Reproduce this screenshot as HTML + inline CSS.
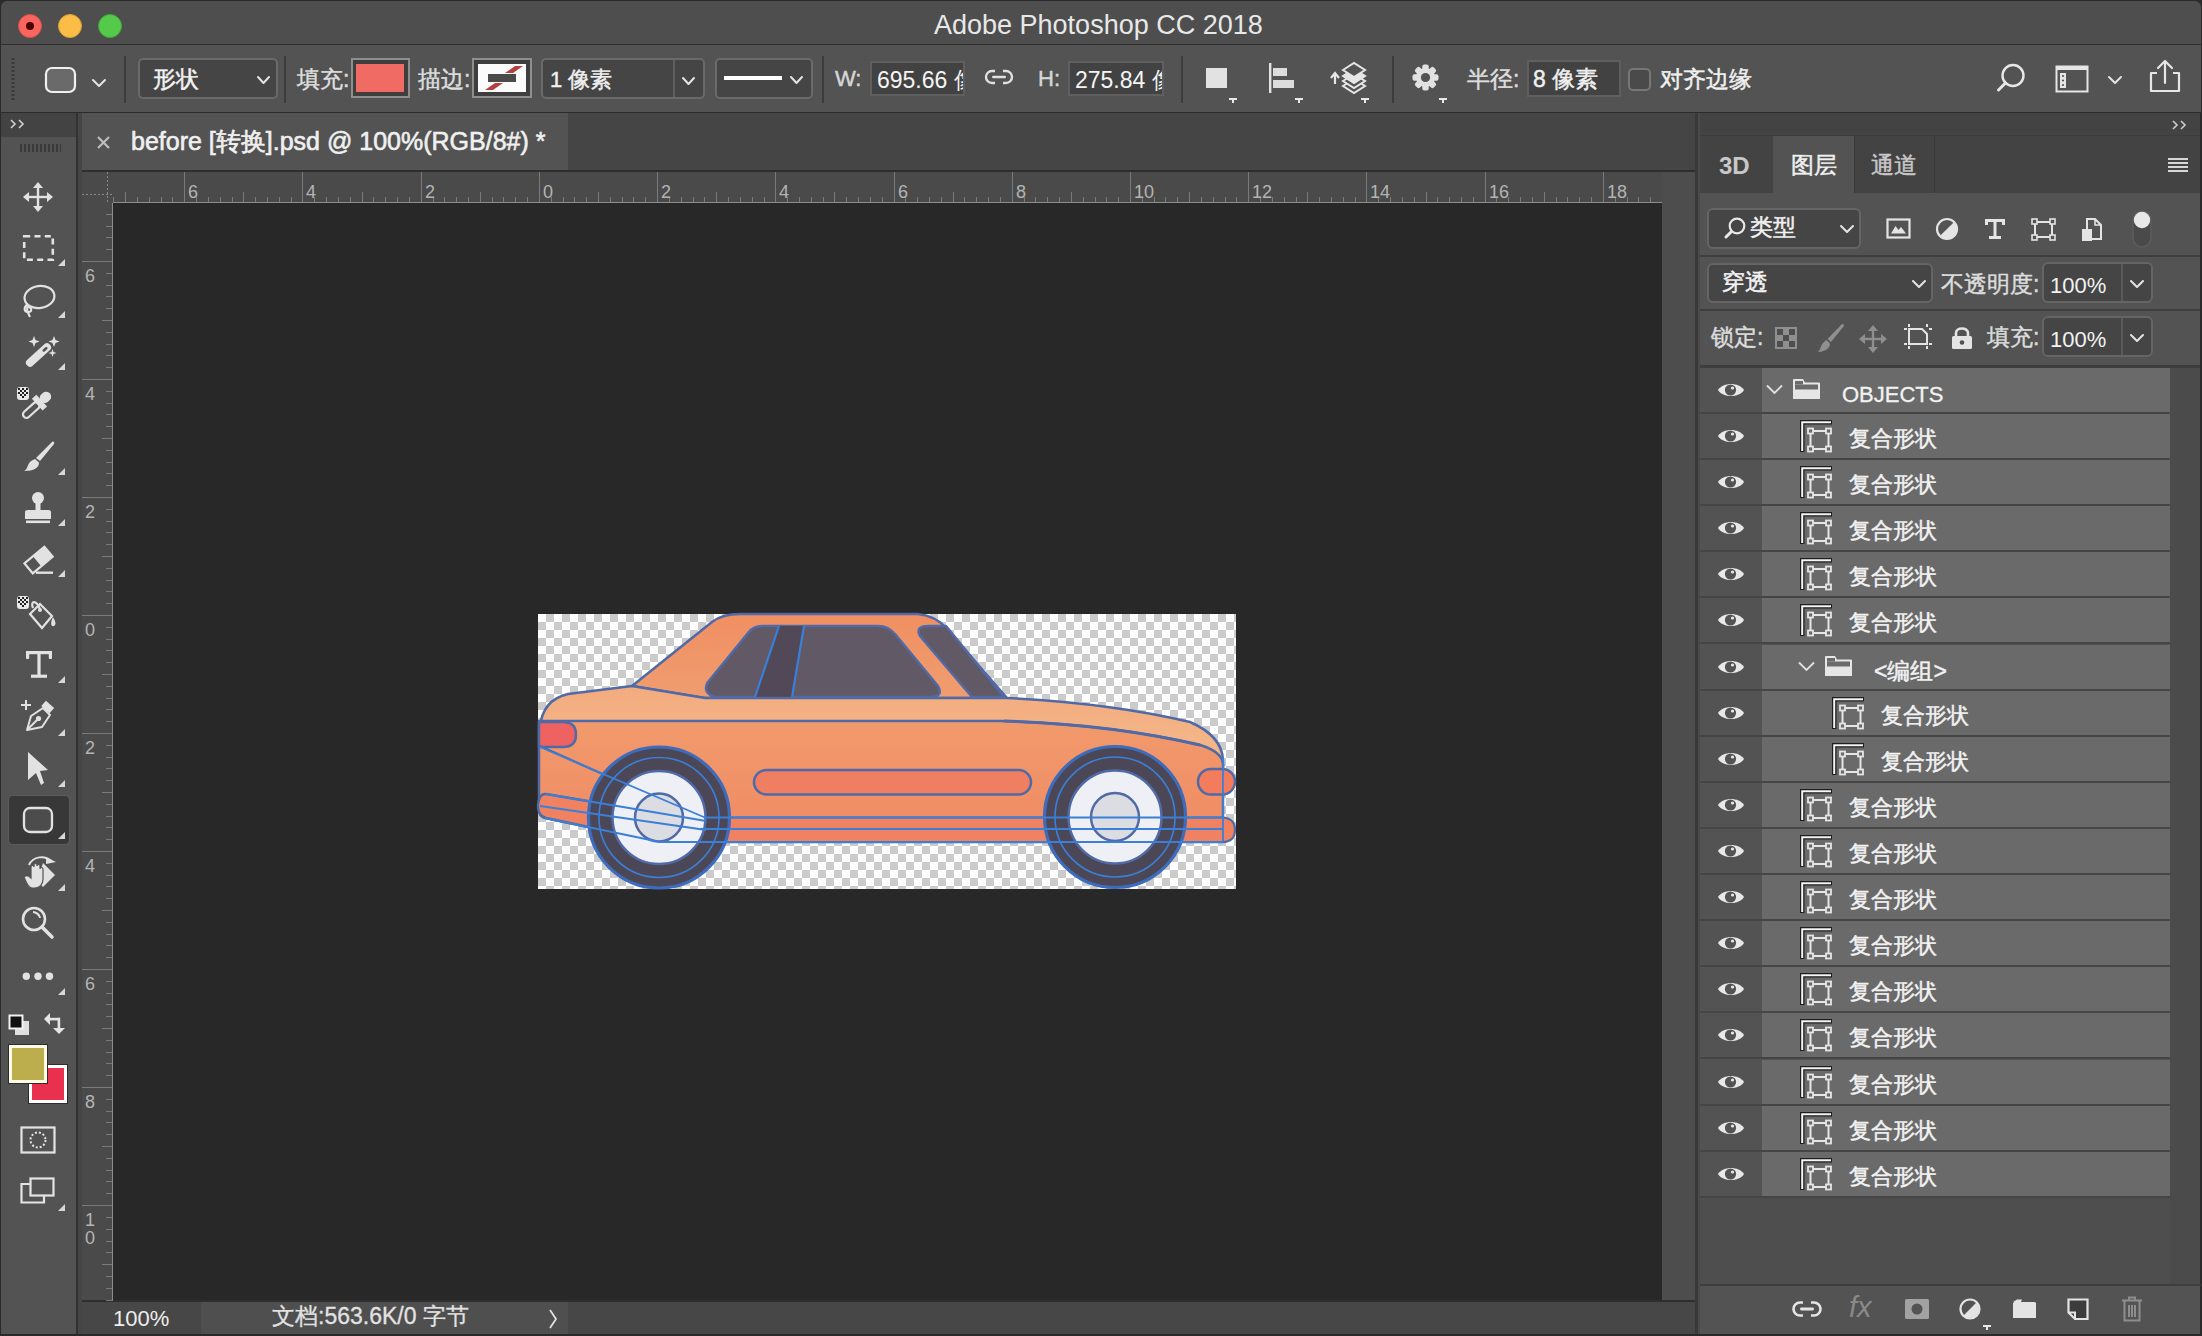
<!DOCTYPE html><html><head><meta charset='utf-8'><style>
*{margin:0;padding:0;box-sizing:border-box}
html,body{width:2202px;height:1336px;overflow:hidden;background:#282828}
body{font-family:"Liberation Sans",sans-serif;color:#e6e6e6;position:relative}
.a{position:absolute}
.t{position:absolute;white-space:nowrap;line-height:1}
svg{position:absolute;overflow:visible}
</style></head><body>
<div class='a' style='left:0px;top:0px;width:2202px;height:1336px;background:#2a2a2a;'></div>
<div class='a' style='left:1px;top:1px;width:2200px;height:43px;background:#4e4e4e;border-radius:6px 6px 0 0'></div>
<div class='a' style='left:0px;top:44px;width:2202px;height:1px;background:#2c2c2c;'></div>
<svg style='left:17px;top:13px;' width='26' height='26' viewBox='0 0 26 26'><circle cx='13' cy='13' r='11.5' fill='#f8665f' stroke='#d9504a' stroke-width='1'/></svg>
<svg style='left:57px;top:13px;' width='26' height='26' viewBox='0 0 26 26'><circle cx='13' cy='13' r='11.5' fill='#fbbd45' stroke='#d9a03a' stroke-width='1'/></svg>
<svg style='left:97px;top:13px;' width='26' height='26' viewBox='0 0 26 26'><circle cx='13' cy='13' r='11.5' fill='#55c94a' stroke='#3ea93a' stroke-width='1'/></svg>
<svg style='left:25px;top:21px;' width='10' height='10' viewBox='0 0 10 10'><circle cx='5' cy='5' r='4' fill='#4d0000'/></svg>
<div class='t' style='left:934px;top:12px;font-size:27px;color:#e8e8e8;'>Adobe Photoshop CC 2018</div>
<div class='a' style='left:1px;top:45px;width:2200px;height:67px;background:#535353;'></div>
<div class='a' style='left:0px;top:112px;width:2202px;height:1px;background:#2c2c2c;'></div>
<div class='a' style='left:1px;top:113px;width:75px;height:1221px;background:#535353;'></div>
<div class='a' style='left:1px;top:113px;width:75px;height:24px;background:#434343;'></div>
<div class='a' style='left:76px;top:113px;width:6px;height:1221px;background:#454545;'></div>
<div class='a' style='left:76px;top:113px;width:2px;height:1221px;background:#323232;'></div>
<div class='a' style='left:82px;top:113px;width:1613px;height:57px;background:#454545;'></div>
<div class='a' style='left:82px;top:113px;width:486px;height:57px;background:#535353;'></div>
<div class='a' style='left:82px;top:170px;width:1613px;height:2px;background:#2e2e2e;'></div>
<div class='a' style='left:82px;top:172px;width:1580px;height:31px;background:#4a4a4a;'></div>
<div class='a' style='left:82px;top:203px;width:31px;height:1099px;background:#4a4a4a;'></div>
<div class='a' style='left:113px;top:203px;width:1549px;height:1097px;background:#282828;'></div>
<div class='a' style='left:1662px;top:172px;width:33px;height:1130px;background:#4d4d4d;'></div>
<div class='a' style='left:82px;top:1300px;width:1613px;height:2px;background:#2e2e2e;'></div>
<div class='a' style='left:82px;top:1302px;width:1613px;height:32px;background:#474747;'></div>
<div class='a' style='left:201px;top:1302px;width:367px;height:32px;background:#4f4f4f;'></div>
<div class='a' style='left:1695px;top:113px;width:3px;height:1221px;background:#393939;'></div>
<div class='a' style='left:1698px;top:113px;width:2px;height:1221px;background:#4a4a4a;'></div>
<div class='a' style='left:1700px;top:113px;width:501px;height:1221px;background:#535353;'></div>
<div class='a' style='left:1700px;top:113px;width:501px;height:23px;background:#434343;'></div>
<div class='a' style='left:1700px;top:136px;width:501px;height:57px;background:#434343;'></div>
<div class='a' style='left:1773px;top:136px;width:82px;height:57px;background:#535353;'></div>
<div class='a' style='left:0px;top:1334px;width:2202px;height:2px;background:#2a2a2a;'></div>
<svg style='left:113px;top:172px;' width='1549' height='31' viewBox='0 0 1549 31'><g stroke='#7a7a7a' stroke-width='1'><line x1='0.5' y1='25' x2='0.5' y2='31' /><line x1='12.5' y1='20' x2='12.5' y2='31' /><line x1='24.5' y1='25' x2='24.5' y2='31' /><line x1='36.5' y1='25' x2='36.5' y2='31' /><line x1='48.5' y1='25' x2='48.5' y2='31' /><line x1='59.5' y1='25' x2='59.5' y2='31' /><line x1='71.5' y1='0' x2='71.5' y2='31' /><line x1='83.5' y1='25' x2='83.5' y2='31' /><line x1='95.5' y1='25' x2='95.5' y2='31' /><line x1='107.5' y1='25' x2='107.5' y2='31' /><line x1='119.5' y1='25' x2='119.5' y2='31' /><line x1='130.5' y1='20' x2='130.5' y2='31' /><line x1='142.5' y1='25' x2='142.5' y2='31' /><line x1='154.5' y1='25' x2='154.5' y2='31' /><line x1='166.5' y1='25' x2='166.5' y2='31' /><line x1='178.5' y1='25' x2='178.5' y2='31' /><line x1='189.5' y1='0' x2='189.5' y2='31' /><line x1='201.5' y1='25' x2='201.5' y2='31' /><line x1='213.5' y1='25' x2='213.5' y2='31' /><line x1='225.5' y1='25' x2='225.5' y2='31' /><line x1='237.5' y1='25' x2='237.5' y2='31' /><line x1='249.5' y1='20' x2='249.5' y2='31' /><line x1='260.5' y1='25' x2='260.5' y2='31' /><line x1='272.5' y1='25' x2='272.5' y2='31' /><line x1='284.5' y1='25' x2='284.5' y2='31' /><line x1='296.5' y1='25' x2='296.5' y2='31' /><line x1='308.5' y1='0' x2='308.5' y2='31' /><line x1='320.5' y1='25' x2='320.5' y2='31' /><line x1='331.5' y1='25' x2='331.5' y2='31' /><line x1='343.5' y1='25' x2='343.5' y2='31' /><line x1='355.5' y1='25' x2='355.5' y2='31' /><line x1='367.5' y1='20' x2='367.5' y2='31' /><line x1='379.5' y1='25' x2='379.5' y2='31' /><line x1='390.5' y1='25' x2='390.5' y2='31' /><line x1='402.5' y1='25' x2='402.5' y2='31' /><line x1='414.5' y1='25' x2='414.5' y2='31' /><line x1='426.5' y1='0' x2='426.5' y2='31' /><line x1='438.5' y1='25' x2='438.5' y2='31' /><line x1='450.5' y1='25' x2='450.5' y2='31' /><line x1='461.5' y1='25' x2='461.5' y2='31' /><line x1='473.5' y1='25' x2='473.5' y2='31' /><line x1='485.5' y1='20' x2='485.5' y2='31' /><line x1='497.5' y1='25' x2='497.5' y2='31' /><line x1='509.5' y1='25' x2='509.5' y2='31' /><line x1='520.5' y1='25' x2='520.5' y2='31' /><line x1='532.5' y1='25' x2='532.5' y2='31' /><line x1='544.5' y1='0' x2='544.5' y2='31' /><line x1='556.5' y1='25' x2='556.5' y2='31' /><line x1='568.5' y1='25' x2='568.5' y2='31' /><line x1='580.5' y1='25' x2='580.5' y2='31' /><line x1='591.5' y1='25' x2='591.5' y2='31' /><line x1='603.5' y1='20' x2='603.5' y2='31' /><line x1='615.5' y1='25' x2='615.5' y2='31' /><line x1='627.5' y1='25' x2='627.5' y2='31' /><line x1='639.5' y1='25' x2='639.5' y2='31' /><line x1='651.5' y1='25' x2='651.5' y2='31' /><line x1='662.5' y1='0' x2='662.5' y2='31' /><line x1='674.5' y1='25' x2='674.5' y2='31' /><line x1='686.5' y1='25' x2='686.5' y2='31' /><line x1='698.5' y1='25' x2='698.5' y2='31' /><line x1='710.5' y1='25' x2='710.5' y2='31' /><line x1='721.5' y1='20' x2='721.5' y2='31' /><line x1='733.5' y1='25' x2='733.5' y2='31' /><line x1='745.5' y1='25' x2='745.5' y2='31' /><line x1='757.5' y1='25' x2='757.5' y2='31' /><line x1='769.5' y1='25' x2='769.5' y2='31' /><line x1='781.5' y1='0' x2='781.5' y2='31' /><line x1='792.5' y1='25' x2='792.5' y2='31' /><line x1='804.5' y1='25' x2='804.5' y2='31' /><line x1='816.5' y1='25' x2='816.5' y2='31' /><line x1='828.5' y1='25' x2='828.5' y2='31' /><line x1='840.5' y1='20' x2='840.5' y2='31' /><line x1='851.5' y1='25' x2='851.5' y2='31' /><line x1='863.5' y1='25' x2='863.5' y2='31' /><line x1='875.5' y1='25' x2='875.5' y2='31' /><line x1='887.5' y1='25' x2='887.5' y2='31' /><line x1='899.5' y1='0' x2='899.5' y2='31' /><line x1='911.5' y1='25' x2='911.5' y2='31' /><line x1='922.5' y1='25' x2='922.5' y2='31' /><line x1='934.5' y1='25' x2='934.5' y2='31' /><line x1='946.5' y1='25' x2='946.5' y2='31' /><line x1='958.5' y1='20' x2='958.5' y2='31' /><line x1='970.5' y1='25' x2='970.5' y2='31' /><line x1='982.5' y1='25' x2='982.5' y2='31' /><line x1='993.5' y1='25' x2='993.5' y2='31' /><line x1='1005.5' y1='25' x2='1005.5' y2='31' /><line x1='1017.5' y1='0' x2='1017.5' y2='31' /><line x1='1029.5' y1='25' x2='1029.5' y2='31' /><line x1='1041.5' y1='25' x2='1041.5' y2='31' /><line x1='1052.5' y1='25' x2='1052.5' y2='31' /><line x1='1064.5' y1='25' x2='1064.5' y2='31' /><line x1='1076.5' y1='20' x2='1076.5' y2='31' /><line x1='1088.5' y1='25' x2='1088.5' y2='31' /><line x1='1100.5' y1='25' x2='1100.5' y2='31' /><line x1='1112.5' y1='25' x2='1112.5' y2='31' /><line x1='1123.5' y1='25' x2='1123.5' y2='31' /><line x1='1135.5' y1='0' x2='1135.5' y2='31' /><line x1='1147.5' y1='25' x2='1147.5' y2='31' /><line x1='1159.5' y1='25' x2='1159.5' y2='31' /><line x1='1171.5' y1='25' x2='1171.5' y2='31' /><line x1='1183.5' y1='25' x2='1183.5' y2='31' /><line x1='1194.5' y1='20' x2='1194.5' y2='31' /><line x1='1206.5' y1='25' x2='1206.5' y2='31' /><line x1='1218.5' y1='25' x2='1218.5' y2='31' /><line x1='1230.5' y1='25' x2='1230.5' y2='31' /><line x1='1242.5' y1='25' x2='1242.5' y2='31' /><line x1='1253.5' y1='0' x2='1253.5' y2='31' /><line x1='1265.5' y1='25' x2='1265.5' y2='31' /><line x1='1277.5' y1='25' x2='1277.5' y2='31' /><line x1='1289.5' y1='25' x2='1289.5' y2='31' /><line x1='1301.5' y1='25' x2='1301.5' y2='31' /><line x1='1313.5' y1='20' x2='1313.5' y2='31' /><line x1='1324.5' y1='25' x2='1324.5' y2='31' /><line x1='1336.5' y1='25' x2='1336.5' y2='31' /><line x1='1348.5' y1='25' x2='1348.5' y2='31' /><line x1='1360.5' y1='25' x2='1360.5' y2='31' /><line x1='1372.5' y1='0' x2='1372.5' y2='31' /><line x1='1383.5' y1='25' x2='1383.5' y2='31' /><line x1='1395.5' y1='25' x2='1395.5' y2='31' /><line x1='1407.5' y1='25' x2='1407.5' y2='31' /><line x1='1419.5' y1='25' x2='1419.5' y2='31' /><line x1='1431.5' y1='20' x2='1431.5' y2='31' /><line x1='1443.5' y1='25' x2='1443.5' y2='31' /><line x1='1454.5' y1='25' x2='1454.5' y2='31' /><line x1='1466.5' y1='25' x2='1466.5' y2='31' /><line x1='1478.5' y1='25' x2='1478.5' y2='31' /><line x1='1490.5' y1='0' x2='1490.5' y2='31' /><line x1='1502.5' y1='25' x2='1502.5' y2='31' /><line x1='1514.5' y1='25' x2='1514.5' y2='31' /><line x1='1525.5' y1='25' x2='1525.5' y2='31' /><line x1='1537.5' y1='25' x2='1537.5' y2='31' /></g><line x1='0' y1='30.5' x2='1549' y2='30.5' stroke='#8c8c8c' stroke-width='1'/></svg>
<div class='t' style='left:188px;top:183px;font-size:18px;color:#b4b4b4;'>6</div>
<div class='t' style='left:306px;top:183px;font-size:18px;color:#b4b4b4;'>4</div>
<div class='t' style='left:425px;top:183px;font-size:18px;color:#b4b4b4;'>2</div>
<div class='t' style='left:543px;top:183px;font-size:18px;color:#b4b4b4;'>0</div>
<div class='t' style='left:661px;top:183px;font-size:18px;color:#b4b4b4;'>2</div>
<div class='t' style='left:779px;top:183px;font-size:18px;color:#b4b4b4;'>4</div>
<div class='t' style='left:898px;top:183px;font-size:18px;color:#b4b4b4;'>6</div>
<div class='t' style='left:1016px;top:183px;font-size:18px;color:#b4b4b4;'>8</div>
<div class='t' style='left:1134px;top:183px;font-size:18px;color:#b4b4b4;'>10</div>
<div class='t' style='left:1252px;top:183px;font-size:18px;color:#b4b4b4;'>12</div>
<div class='t' style='left:1370px;top:183px;font-size:18px;color:#b4b4b4;'>14</div>
<div class='t' style='left:1489px;top:183px;font-size:18px;color:#b4b4b4;'>16</div>
<div class='t' style='left:1607px;top:183px;font-size:18px;color:#b4b4b4;'>18</div>
<svg style='left:82px;top:203px;' width='31' height='1097' viewBox='0 0 31 1097'><g stroke='#7a7a7a' stroke-width='1'><line x1='24' y1='11.5' x2='31' y2='11.5' /><line x1='24' y1='23.5' x2='31' y2='23.5' /><line x1='24' y1='34.5' x2='31' y2='34.5' /><line x1='24' y1='46.5' x2='31' y2='46.5' /><line x1='0' y1='58.5' x2='31' y2='58.5' /><line x1='24' y1='70.5' x2='31' y2='70.5' /><line x1='24' y1='82.5' x2='31' y2='82.5' /><line x1='24' y1='93.5' x2='31' y2='93.5' /><line x1='24' y1='105.5' x2='31' y2='105.5' /><line x1='20' y1='117.5' x2='31' y2='117.5' /><line x1='24' y1='129.5' x2='31' y2='129.5' /><line x1='24' y1='141.5' x2='31' y2='141.5' /><line x1='24' y1='152.5' x2='31' y2='152.5' /><line x1='24' y1='164.5' x2='31' y2='164.5' /><line x1='0' y1='176.5' x2='31' y2='176.5' /><line x1='24' y1='188.5' x2='31' y2='188.5' /><line x1='24' y1='200.5' x2='31' y2='200.5' /><line x1='24' y1='211.5' x2='31' y2='211.5' /><line x1='24' y1='223.5' x2='31' y2='223.5' /><line x1='20' y1='235.5' x2='31' y2='235.5' /><line x1='24' y1='247.5' x2='31' y2='247.5' /><line x1='24' y1='259.5' x2='31' y2='259.5' /><line x1='24' y1='270.5' x2='31' y2='270.5' /><line x1='24' y1='282.5' x2='31' y2='282.5' /><line x1='0' y1='294.5' x2='31' y2='294.5' /><line x1='24' y1='306.5' x2='31' y2='306.5' /><line x1='24' y1='318.5' x2='31' y2='318.5' /><line x1='24' y1='329.5' x2='31' y2='329.5' /><line x1='24' y1='341.5' x2='31' y2='341.5' /><line x1='20' y1='353.5' x2='31' y2='353.5' /><line x1='24' y1='365.5' x2='31' y2='365.5' /><line x1='24' y1='377.5' x2='31' y2='377.5' /><line x1='24' y1='388.5' x2='31' y2='388.5' /><line x1='24' y1='400.5' x2='31' y2='400.5' /><line x1='0' y1='412.5' x2='31' y2='412.5' /><line x1='24' y1='424.5' x2='31' y2='424.5' /><line x1='24' y1='436.5' x2='31' y2='436.5' /><line x1='24' y1='447.5' x2='31' y2='447.5' /><line x1='24' y1='459.5' x2='31' y2='459.5' /><line x1='20' y1='471.5' x2='31' y2='471.5' /><line x1='24' y1='483.5' x2='31' y2='483.5' /><line x1='24' y1='495.5' x2='31' y2='495.5' /><line x1='24' y1='506.5' x2='31' y2='506.5' /><line x1='24' y1='518.5' x2='31' y2='518.5' /><line x1='0' y1='530.5' x2='31' y2='530.5' /><line x1='24' y1='542.5' x2='31' y2='542.5' /><line x1='24' y1='554.5' x2='31' y2='554.5' /><line x1='24' y1='565.5' x2='31' y2='565.5' /><line x1='24' y1='577.5' x2='31' y2='577.5' /><line x1='20' y1='589.5' x2='31' y2='589.5' /><line x1='24' y1='601.5' x2='31' y2='601.5' /><line x1='24' y1='613.5' x2='31' y2='613.5' /><line x1='24' y1='624.5' x2='31' y2='624.5' /><line x1='24' y1='636.5' x2='31' y2='636.5' /><line x1='0' y1='648.5' x2='31' y2='648.5' /><line x1='24' y1='660.5' x2='31' y2='660.5' /><line x1='24' y1='672.5' x2='31' y2='672.5' /><line x1='24' y1='683.5' x2='31' y2='683.5' /><line x1='24' y1='695.5' x2='31' y2='695.5' /><line x1='20' y1='707.5' x2='31' y2='707.5' /><line x1='24' y1='719.5' x2='31' y2='719.5' /><line x1='24' y1='731.5' x2='31' y2='731.5' /><line x1='24' y1='742.5' x2='31' y2='742.5' /><line x1='24' y1='754.5' x2='31' y2='754.5' /><line x1='0' y1='766.5' x2='31' y2='766.5' /><line x1='24' y1='778.5' x2='31' y2='778.5' /><line x1='24' y1='790.5' x2='31' y2='790.5' /><line x1='24' y1='801.5' x2='31' y2='801.5' /><line x1='24' y1='813.5' x2='31' y2='813.5' /><line x1='20' y1='825.5' x2='31' y2='825.5' /><line x1='24' y1='837.5' x2='31' y2='837.5' /><line x1='24' y1='849.5' x2='31' y2='849.5' /><line x1='24' y1='860.5' x2='31' y2='860.5' /><line x1='24' y1='872.5' x2='31' y2='872.5' /><line x1='0' y1='884.5' x2='31' y2='884.5' /><line x1='24' y1='896.5' x2='31' y2='896.5' /><line x1='24' y1='908.5' x2='31' y2='908.5' /><line x1='24' y1='919.5' x2='31' y2='919.5' /><line x1='24' y1='931.5' x2='31' y2='931.5' /><line x1='20' y1='943.5' x2='31' y2='943.5' /><line x1='24' y1='955.5' x2='31' y2='955.5' /><line x1='24' y1='967.5' x2='31' y2='967.5' /><line x1='24' y1='978.5' x2='31' y2='978.5' /><line x1='24' y1='990.5' x2='31' y2='990.5' /><line x1='0' y1='1002.5' x2='31' y2='1002.5' /><line x1='24' y1='1014.5' x2='31' y2='1014.5' /><line x1='24' y1='1026.5' x2='31' y2='1026.5' /><line x1='24' y1='1038.5' x2='31' y2='1038.5' /><line x1='24' y1='1049.5' x2='31' y2='1049.5' /><line x1='20' y1='1061.5' x2='31' y2='1061.5' /><line x1='24' y1='1073.5' x2='31' y2='1073.5' /><line x1='24' y1='1085.5' x2='31' y2='1085.5' /><line x1='24' y1='1097.5' x2='31' y2='1097.5' /></g><line x1='30.5' y1='0' x2='30.5' y2='1097' stroke='#8c8c8c' stroke-width='1'/></svg>
<div class='t' style='left:85px;top:267px;font-size:18px;color:#b4b4b4;'>6</div>
<div class='t' style='left:85px;top:385px;font-size:18px;color:#b4b4b4;'>4</div>
<div class='t' style='left:85px;top:503px;font-size:18px;color:#b4b4b4;'>2</div>
<div class='t' style='left:85px;top:621px;font-size:18px;color:#b4b4b4;'>0</div>
<div class='t' style='left:85px;top:739px;font-size:18px;color:#b4b4b4;'>2</div>
<div class='t' style='left:85px;top:857px;font-size:18px;color:#b4b4b4;'>4</div>
<div class='t' style='left:85px;top:975px;font-size:18px;color:#b4b4b4;'>6</div>
<div class='t' style='left:85px;top:1093px;font-size:18px;color:#b4b4b4;'>8</div>
<div class='t' style='left:85px;top:1211px;font-size:18px;color:#b4b4b4;'>1</div>
<div class='t' style='left:85px;top:1229px;font-size:18px;color:#b4b4b4;'>0</div>
<svg style='left:82px;top:172px;' width='31' height='31' viewBox='0 0 31 31'><g stroke='#8a8a8a' stroke-width='1' stroke-dasharray='2,2'><line x1='0' y1='22.5' x2='31' y2='22.5'/><line x1='25.5' y1='0' x2='25.5' y2='31'/></g></svg>
<svg style='left:96px;top:135px;' width='15' height='15' viewBox='0 0 15 15'><g stroke='#bdbdbd' stroke-width='2.2'><line x1='2' y1='2' x2='13' y2='13'/><line x1='13' y1='2' x2='2' y2='13'/></g></svg>
<div class='t' style='left:131px;top:129px;font-size:25px;color:#f0f0f0;-webkit-text-stroke:0.6px #f0f0f0'>before [转换].psd @ 100%(RGB/8#) *</div>
<div class='t' style='left:113px;top:1308px;font-size:22px;color:#eeeeee;'>100%</div>
<div class='t' style='left:272px;top:1305px;font-size:23px;color:#e2e2e2;-webkit-text-stroke:0.3px #e2e2e2'>文档:563.6K/0 字节</div>
<svg style='left:548px;top:1309px;' width='10' height='20' viewBox='0 0 10 20'><polyline points='2,1 8,10 2,19' fill='none' stroke='#e0e0e0' stroke-width='1.8'/></svg>
<svg style='left:11px;top:58px;' width='4' height='44' viewBox='0 0 4 44'><line x1='2' y1='0' x2='2' y2='44' stroke='#3a3a3a' stroke-width='3' stroke-dasharray='2,2'/></svg>
<svg style='left:44px;top:66px;' width='33' height='28' viewBox='0 0 33 28'><rect x='2' y='2' width='29' height='24' rx='6' fill='#6a6a6a' stroke='#f0f0f0' stroke-width='2.2'/></svg>
<svg style='left:92px;top:79px;' width='14' height='8' viewBox='0 0 14 8'><polyline points='1,1 7.0,7 13,1' fill='none' stroke='#e4e4e4' stroke-width='2' stroke-linecap='round' stroke-linejoin='round'/></svg>
<div class='a' style='left:124px;top:56px;width:2px;height:47px;background:#3c3c3c;'></div>
<div class='a' style='left:138px;top:58px;width:140px;height:41px;background:#454545;border:2px solid #6a6a6a;border-radius:5px'></div>
<div class='t' style='left:153px;top:68px;font-size:23px;color:#f2f2f2;-webkit-text-stroke:0.45px #f2f2f2'>形状</div>
<svg style='left:257px;top:76px;' width='13' height='8' viewBox='0 0 13 8'><polyline points='1,1 6.5,7 12,1' fill='none' stroke='#e4e4e4' stroke-width='2' stroke-linecap='round' stroke-linejoin='round'/></svg>
<div class='a' style='left:284px;top:56px;width:2px;height:47px;background:#3c3c3c;'></div>
<div class='t' style='left:297px;top:68px;font-size:23px;color:#dedede;-webkit-text-stroke:0.45px #dedede'>填充:</div>
<div class='a' style='left:351px;top:58px;width:59px;height:40px;border:2px solid #8e8e8e;background:#3e3e3e'></div>
<div class='a' style='left:356px;top:64px;width:48px;height:28px;background:#ef6b64;'></div>
<div class='t' style='left:418px;top:68px;font-size:23px;color:#dedede;-webkit-text-stroke:0.45px #dedede'>描边:</div>
<div class='a' style='left:472px;top:58px;width:60px;height:40px;border:2px solid #8e8e8e;background:#3e3e3e'></div>
<svg style='left:478px;top:64px;' width='48' height='28' viewBox='0 0 48 28'><rect x='0' y='0' width='48' height='28' fill='#fbfbfb'/><polygon points='37,2 45,2 35,9 27,9' fill='#b3413d'/><polygon points='17,19 25,19 15,26 7,26' fill='#b3413d'/><rect x='10' y='10' width='28' height='8' fill='#4a4a4a'/></svg>
<div class='a' style='left:541px;top:58px;width:164px;height:41px;background:#454545;border:2px solid #6a6a6a;border-radius:5px'></div>
<div class='a' style='left:673px;top:60px;width:2px;height:37px;background:#5e5e5e;'></div>
<div class='t' style='left:550px;top:69px;font-size:22px;color:#f0f0f0;-webkit-text-stroke:0.45px #f0f0f0'>1 像素</div>
<svg style='left:682px;top:77px;' width='13' height='8' viewBox='0 0 13 8'><polyline points='1,1 6.5,7 12,1' fill='none' stroke='#e4e4e4' stroke-width='2' stroke-linecap='round' stroke-linejoin='round'/></svg>
<div class='a' style='left:715px;top:58px;width:98px;height:41px;background:#454545;border:2px solid #6a6a6a;border-radius:5px'></div>
<div class='a' style='left:724px;top:76px;width:58px;height:4px;background:#ffffff;'></div>
<svg style='left:790px;top:76px;' width='13' height='8' viewBox='0 0 13 8'><polyline points='1,1 6.5,7 12,1' fill='none' stroke='#e4e4e4' stroke-width='2' stroke-linecap='round' stroke-linejoin='round'/></svg>
<div class='a' style='left:822px;top:56px;width:2px;height:47px;background:#3c3c3c;'></div>
<div class='t' style='left:835px;top:68px;font-size:22px;color:#d6d6d6;-webkit-text-stroke:0.45px #d6d6d6'>W:</div>
<div class='a' style='left:870px;top:61px;width:95px;height:35px;background:#424242;border:2px solid #5f5f5f;overflow:hidden'><div class='t' style='left:5px;top:6px;font-size:23px;color:#f4f4f4'>695.66 像</div></div>
<svg style='left:984px;top:69px;' width='30' height='16' viewBox='0 0 30 16'><g fill='none' stroke='#e0e0e0' stroke-width='2.4'><path d='M11,2 H8 a6,6 0 0 0 0,12 H11'/><path d='M19,2 H22 a6,6 0 0 1 0,12 H19'/></g><rect x='8' y='6.8' width='14' height='2.4' rx='1.2' fill='#e0e0e0'/></svg>
<div class='t' style='left:1038px;top:68px;font-size:22px;color:#d6d6d6;-webkit-text-stroke:0.45px #d6d6d6'>H:</div>
<div class='a' style='left:1068px;top:61px;width:96px;height:35px;background:#424242;border:2px solid #5f5f5f;overflow:hidden'><div class='t' style='left:5px;top:6px;font-size:23px;color:#f4f4f4'>275.84 像</div></div>
<div class='a' style='left:1181px;top:56px;width:2px;height:47px;background:#3c3c3c;'></div>
<div class='a' style='left:1206px;top:68px;width:21px;height:20px;background:#e2e2e2;'></div>
<svg style='left:1229px;top:98px;' width='8' height='5' viewBox='0 0 8 5'><rect x='0' y='0' width='8' height='2' fill='#e8e8e8'/><rect x='3' y='2' width='2' height='3' fill='#e8e8e8'/></svg>
<svg style='left:1268px;top:62px;' width='30' height='33' viewBox='0 0 30 33'><rect x='1' y='1' width='2.4' height='30' fill='#e2e2e2'/><rect x='5' y='6' width='14' height='8' fill='#dcdcdc'/><rect x='5' y='18' width='21' height='8' fill='#dcdcdc'/></svg>
<svg style='left:1295px;top:98px;' width='8' height='5' viewBox='0 0 8 5'><rect x='0' y='0' width='8' height='2' fill='#e8e8e8'/><rect x='3' y='2' width='2' height='3' fill='#e8e8e8'/></svg>
<svg style='left:1328px;top:60px;' width='40' height='36' viewBox='0 0 40 36'><path d='M7,24 V14 M3,18 L7,13 L11,18' fill='none' stroke='#e6e6e6' stroke-width='2.2'/><g fill='none' stroke='#e6e6e6' stroke-width='2'><path d='M15,26 L26,19 L37,26 L26,33 Z' fill='#535353'/><path d='M15,21 L26,14 L37,21 L26,28 Z' fill='#535353'/><path d='M15,16 L26,9 L37,16 L26,23 Z' fill='#e6e6e6'/><path d='M15,10 L26,3 L37,10 L26,17 Z' fill='#535353'/></g></svg>
<svg style='left:1361px;top:98px;' width='8' height='5' viewBox='0 0 8 5'><rect x='0' y='0' width='8' height='2' fill='#e8e8e8'/><rect x='3' y='2' width='2' height='3' fill='#e8e8e8'/></svg>
<div class='a' style='left:1392px;top:56px;width:2px;height:47px;background:#3c3c3c;'></div>
<svg style='left:1412px;top:64px;' width='27' height='27' viewBox='0 0 27 27'><g fill='#e2e2e2'><rect x='10.3' y='0.5' width='6.4' height='6' rx='2' transform='rotate(0 13.5 13.5)'/><rect x='10.3' y='0.5' width='6.4' height='6' rx='2' transform='rotate(45 13.5 13.5)'/><rect x='10.3' y='0.5' width='6.4' height='6' rx='2' transform='rotate(90 13.5 13.5)'/><rect x='10.3' y='0.5' width='6.4' height='6' rx='2' transform='rotate(135 13.5 13.5)'/><rect x='10.3' y='0.5' width='6.4' height='6' rx='2' transform='rotate(180 13.5 13.5)'/><rect x='10.3' y='0.5' width='6.4' height='6' rx='2' transform='rotate(225 13.5 13.5)'/><rect x='10.3' y='0.5' width='6.4' height='6' rx='2' transform='rotate(270 13.5 13.5)'/><rect x='10.3' y='0.5' width='6.4' height='6' rx='2' transform='rotate(315 13.5 13.5)'/><circle cx='13.5' cy='13.5' r='9.5'/></g><circle cx='13.5' cy='13.5' r='4.6' fill='#535353'/></svg>
<svg style='left:1439px;top:98px;' width='8' height='5' viewBox='0 0 8 5'><rect x='0' y='0' width='8' height='2' fill='#e8e8e8'/><rect x='3' y='2' width='2' height='3' fill='#e8e8e8'/></svg>
<div class='t' style='left:1467px;top:68px;font-size:23px;color:#dedede;-webkit-text-stroke:0.45px #dedede'>半径:</div>
<div class='a' style='left:1527px;top:60px;width:94px;height:37px;background:#424242;border:2px solid #5f5f5f'></div>
<div class='t' style='left:1533px;top:68px;font-size:23px;color:#f0f0f0;-webkit-text-stroke:0.45px #f0f0f0'>8 像素</div>
<div class='a' style='left:1628px;top:68px;width:23px;height:23px;border:2px solid #777;border-radius:5px;background:#4a4a4a'></div>
<div class='t' style='left:1660px;top:68px;font-size:23px;color:#f0f0f0;-webkit-text-stroke:0.45px #f0f0f0'>对齐边缘</div>
<svg style='left:1995px;top:62px;' width='32' height='32' viewBox='0 0 32 32'><circle cx='18' cy='13.5' r='10.5' fill='none' stroke='#e8e8e8' stroke-width='2.4'/><line x1='10.5' y1='21' x2='3.5' y2='28' stroke='#e8e8e8' stroke-width='3' stroke-linecap='round'/></svg>
<svg style='left:2055px;top:65px;' width='34' height='28' viewBox='0 0 34 28'><rect x='1.5' y='1.5' width='31' height='25' fill='none' stroke='#e6e6e6' stroke-width='2'/><rect x='1.5' y='1.5' width='31' height='3.5' fill='#e6e6e6'/><rect x='5' y='8' width='6' height='15' fill='#e6e6e6'/><circle cx='8' cy='11' r='1.1' fill='#535353'/><circle cx='8' cy='15.5' r='1.1' fill='#535353'/><circle cx='8' cy='20' r='1.1' fill='#535353'/></svg>
<svg style='left:2108px;top:76px;' width='14' height='8' viewBox='0 0 14 8'><polyline points='1,1 7.0,7 13,1' fill='none' stroke='#e4e4e4' stroke-width='2' stroke-linecap='round' stroke-linejoin='round'/></svg>
<svg style='left:2148px;top:58px;' width='34' height='36' viewBox='0 0 34 36'><path d='M9,15 H3 V33 H31 V15 H25' fill='none' stroke='#e6e6e6' stroke-width='2.2' stroke-linejoin='round'/><path d='M17,25 V3 M10,10 L17,3 L24,10' fill='none' stroke='#e6e6e6' stroke-width='2.2' stroke-linecap='round' stroke-linejoin='round'/></svg>
<svg style='left:10px;top:119px;' width='16' height='10' viewBox='0 0 16 10'><polyline points='1,1 5,5 1,9' fill='none' stroke='#d0d0d0' stroke-width='1.6'/><polyline points='9,1 13,5 9,9' fill='none' stroke='#d0d0d0' stroke-width='1.6'/></svg>
<svg style='left:20px;top:144px;' width='41' height='8' viewBox='0 0 41 8'><line x1='0' y1='4' x2='41' y2='4' stroke='#3a3a3a' stroke-width='8' stroke-dasharray='2,2'/></svg>
<svg style='left:22px;top:181px;' width='32' height='32' viewBox='0 0 32 32'><g fill='#e2e2e2'><rect x='14.8' y='5' width='2.4' height='22'/><rect x='5' y='14.8' width='22' height='2.4'/><polygon points='16,1 21,7 11,7'/><polygon points='16,31 21,25 11,25'/><polygon points='1,16 7,11 7,21'/><polygon points='31,16 25,11 25,21'/></g></svg>
<svg style='left:22px;top:234px;' width='33' height='28' viewBox='0 0 33 28'><rect x='2.2' y='2.2' width='28.6' height='23.6' fill='none' stroke='#e2e2e2' stroke-width='2.6' stroke-dasharray='6,4.3'/></svg>
<svg style='left:58px;top:259px;' width='7' height='7' viewBox='0 0 7 7'><polygon points='7,0 7,7 0,7' fill='#d8d8d8'/></svg>
<svg style='left:22px;top:284px;' width='34' height='35' viewBox='0 0 34 35'><g fill='none' stroke='#e2e2e2' stroke-width='2.2'><ellipse cx='17.5' cy='13' rx='15' ry='11' transform='rotate(-8 17.5 13)'/><path d='M6,20 C1,23 2,29 7,28 C11,27 9,23 6,23 C4,24 6,29 8,33'/></g></svg>
<svg style='left:58px;top:311px;' width='7' height='7' viewBox='0 0 7 7'><polygon points='7,0 7,7 0,7' fill='#d8d8d8'/></svg>
<svg style='left:20px;top:334px;' width='40' height='36' viewBox='0 0 40 36'><g fill='#e2e2e2'><rect x='3' y='17' width='31' height='8' rx='4' transform='rotate(-42 18.5 21)'/><path d='M14,2 L15.5,6 L19.5,7.5 L15.5,9 L14,13 L12.5,9 L8.5,7.5 L12.5,6 Z'/><path d='M34,2 L35.5,6 L39.5,7.5 L35.5,9 L34,13 L32.5,9 L28.5,7.5 L32.5,6 Z'/><path d='M32.5,15 L33.5,18 L36.5,19 L33.5,20 L32.5,23 L31.5,20 L28.5,19 L31.5,18 Z'/></g><rect x='22' y='14' width='6' height='2.6' rx='1.3' fill='#535353' transform='rotate(-42 25 15.3)'/></svg>
<svg style='left:58px;top:363px;' width='7' height='7' viewBox='0 0 7 7'><polygon points='7,0 7,7 0,7' fill='#d8d8d8'/></svg>
<svg style='left:16px;top:386px;' width='40' height='34' viewBox='0 0 40 34'><g transform='rotate(-42 22 18)'><rect x='3' y='14.5' width='20' height='7' rx='3.5' fill='none' stroke='#e2e2e2' stroke-width='2.2'/><rect x='21' y='10' width='6' height='16' fill='#e2e2e2'/><rect x='26' y='13' width='12' height='10' rx='5' fill='#e2e2e2'/></g><g><rect x='1' y='1' width='12' height='13' fill='#e8e8e8' rx='3'/><g fill='#222'><rect x='2' y='2' width='2' height='2'/><rect x='6' y='2' width='2' height='2'/><rect x='10' y='2' width='2' height='2'/><rect x='4' y='4' width='2' height='2'/><rect x='8' y='4' width='2' height='2'/><rect x='2' y='6' width='2' height='2'/><rect x='6' y='6' width='2' height='2'/><rect x='10' y='6' width='2' height='2'/><rect x='4' y='8' width='2' height='2'/><rect x='8' y='8' width='2' height='2'/><rect x='6' y='10' width='2' height='2'/></g></g></svg>
<svg style='left:22px;top:440px;' width='34' height='33' viewBox='0 0 34 33'><path d='M30,2 C31,1 33,2 32,4 L18,21 L14,18 Z' fill='#e2e2e2'/><path d='M13,19 L17,22.5 C17,28 12,31 2,31 C6,29 5,25 8,22 C10,20 12,19.5 13,19 Z' fill='#e2e2e2'/></svg>
<svg style='left:58px;top:468px;' width='7' height='7' viewBox='0 0 7 7'><polygon points='7,0 7,7 0,7' fill='#d8d8d8'/></svg>
<svg style='left:24px;top:491px;' width='29' height='33' viewBox='0 0 29 33'><g fill='#e2e2e2'><circle cx='14' cy='7' r='6'/><rect x='11.5' y='11' width='5' height='9'/><path d='M1,21 Q1,19 4,19 H24 Q27,19 27,21 V28 H1 Z'/><rect x='2' y='29.5' width='24' height='2.6'/></g></svg>
<svg style='left:58px;top:519px;' width='7' height='7' viewBox='0 0 7 7'><polygon points='7,0 7,7 0,7' fill='#d8d8d8'/></svg>
<svg style='left:22px;top:545px;' width='34' height='31' viewBox='0 0 34 31'><g transform='rotate(-40 17 14)'><rect x='3' y='8' width='26' height='13' fill='none' stroke='#e2e2e2' stroke-width='2.2'/><rect x='14' y='8' width='15' height='13' fill='#e2e2e2'/></g><rect x='14' y='26.5' width='17' height='2.4' fill='#e2e2e2'/></svg>
<svg style='left:58px;top:570px;' width='7' height='7' viewBox='0 0 7 7'><polygon points='7,0 7,7 0,7' fill='#d8d8d8'/></svg>
<svg style='left:16px;top:595px;' width='42' height='37' viewBox='0 0 42 37'><rect x='1' y='1' width='12' height='13' fill='#e8e8e8' rx='3'/><g fill='#222'><rect x='2' y='2' width='2' height='2'/><rect x='6' y='2' width='2' height='2'/><rect x='10' y='2' width='2' height='2'/><rect x='4' y='4' width='2' height='2'/><rect x='8' y='4' width='2' height='2'/><rect x='2' y='6' width='2' height='2'/><rect x='6' y='6' width='2' height='2'/><rect x='10' y='6' width='2' height='2'/><rect x='4' y='8' width='2' height='2'/><rect x='8' y='8' width='2' height='2'/><rect x='6' y='10' width='2' height='2'/></g><g fill='none' stroke='#e2e2e2' stroke-width='2.2'><path d='M14,19 L24,9 L36,21 L26,33 Z'/><path d='M17,13 C14,6 20,4 24,14'/></g><circle cx='24' cy='15' r='2' fill='#e2e2e2'/><path d='M37,22 C39,26 41,29 38,31 C35,32 34,28 37,22 Z' fill='#e2e2e2'/></svg>
<svg style='left:24px;top:649px;' width='30' height='31' viewBox='0 0 30 31'><g fill='#e2e2e2'><rect x='2' y='2' width='26' height='3.2'/><rect x='2' y='2' width='3.2' height='8' rx='1'/><rect x='24.8' y='2' width='3.2' height='8' rx='1'/><rect x='13.4' y='2' width='3.2' height='26'/><rect x='7' y='25.6' width='16' height='3.2'/></g></svg>
<svg style='left:58px;top:676px;' width='7' height='7' viewBox='0 0 7 7'><polygon points='7,0 7,7 0,7' fill='#d8d8d8'/></svg>
<svg style='left:20px;top:699px;' width='36' height='34' viewBox='0 0 36 34'><g stroke='#e2e2e2' stroke-width='2' fill='none'><line x1='6' y1='1' x2='6' y2='11'/><line x1='1' y1='6' x2='11' y2='6'/><path d='M7,31 L11,17 L23,9 L30,16 L22,28 Z' stroke-linejoin='round'/><line x1='8' y1='30' x2='17' y2='21'/></g><circle cx='18.5' cy='19.5' r='2.6' fill='#e2e2e2'/><rect x='22' y='4' width='11' height='7' fill='#e2e2e2' transform='rotate(42 27 8)'/></svg>
<svg style='left:58px;top:729px;' width='7' height='7' viewBox='0 0 7 7'><polygon points='7,0 7,7 0,7' fill='#d8d8d8'/></svg>
<svg style='left:26px;top:751px;' width='24' height='36' viewBox='0 0 24 36'><polygon points='2,1 22,19 14,20 18,32 15,34 10,22 2,29' fill='#e2e2e2'/></svg>
<svg style='left:58px;top:780px;' width='7' height='7' viewBox='0 0 7 7'><polygon points='7,0 7,7 0,7' fill='#d8d8d8'/></svg>
<div class='a' style='left:8px;top:795px;width:62px;height:50px;background:#383838;border:1px solid #5c5c5c;border-radius:5px'></div>
<svg style='left:22px;top:806px;' width='32' height='28' viewBox='0 0 32 28'><rect x='2' y='2' width='28' height='24' rx='6' fill='#4c4c4c' stroke='#e2e2e2' stroke-width='2.3'/></svg>
<svg style='left:58px;top:832px;' width='7' height='7' viewBox='0 0 7 7'><polygon points='7,0 7,7 0,7' fill='#d8d8d8'/></svg>
<svg style='left:21px;top:853px;' width='37' height='37' viewBox='0 0 37 37'><path d='M8,12 C12,3 24,2 30,8' fill='none' stroke='#e2e2e2' stroke-width='2'/><polygon points='25,4 35,9 25,11' fill='#e2e2e2'/><polygon points='22,10 34,22 22,34 16,28' fill='#e2e2e2'/><path d='M3,24 C5,22 8,23 10,25 V14 C10,12 13,12 13,14 V12 C13,10 16,10 16,12 V13 C16,11 19,11 19,13 V16 C19,14 22,14 22,16 V26 C22,31 19,35 14,35 H11 C8,35 6,32 3,24 Z' fill='#e2e2e2' stroke='#535353' stroke-width='1.2'/></svg>
<svg style='left:58px;top:884px;' width='7' height='7' viewBox='0 0 7 7'><polygon points='7,0 7,7 0,7' fill='#d8d8d8'/></svg>
<svg style='left:20px;top:905px;' width='36' height='36' viewBox='0 0 36 36'><circle cx='14' cy='14' r='11' fill='none' stroke='#e2e2e2' stroke-width='2.6'/><path d='M13,7 C16,7 20,10 20,13' fill='none' stroke='#e2e2e2' stroke-width='2'/><line x1='22' y1='22' x2='32' y2='32' stroke='#e2e2e2' stroke-width='3.6' stroke-linecap='round'/></svg>
<svg style='left:20px;top:970px;' width='36' height='14' viewBox='0 0 36 14'><g fill='#e2e2e2'><circle cx='6.3' cy='6.3' r='3.7'/><circle cx='18' cy='6.3' r='3.7'/><circle cx='29.5' cy='6.3' r='3.7'/></g></svg>
<svg style='left:58px;top:988px;' width='7' height='7' viewBox='0 0 7 7'><polygon points='7,0 7,7 0,7' fill='#d8d8d8'/></svg>
<svg style='left:8px;top:1014px;' width='23' height='23' viewBox='0 0 23 23'><rect x='7' y='7' width='14' height='14' fill='#e0e0e0'/><rect x='1.5' y='1.5' width='13' height='13' fill='#111' stroke='#f2f2f2' stroke-width='2'/></svg>
<svg style='left:43px;top:1012px;' width='22' height='24' viewBox='0 0 22 24'><g fill='#e4e4e4'><polygon points='1,7 7,1 7,13'/><rect x='6' y='5.8' width='11' height='2.6'/><rect x='14.6' y='5.8' width='2.6' height='12'/><polygon points='10,16 22,16 16,22'/></g></svg>
<div class='a' style='left:29px;top:1065px;width:38px;height:38px;background:#e9304f;border:3px solid #fdfdfd;box-shadow:0 0 0 1px #2c2c2c'></div>
<div class='a' style='left:9px;top:1045px;width:38px;height:38px;background:#bcad4d;border:3px solid #fffbe6;box-shadow:0 0 0 1px #2c2c2c'></div>
<svg style='left:20px;top:1126px;' width='36' height='28' viewBox='0 0 36 28'><rect x='1.5' y='1.5' width='33' height='25' fill='none' stroke='#e4e4e4' stroke-width='2.2'/><circle cx='18' cy='14' r='7.5' fill='none' stroke='#e4e4e4' stroke-width='2' stroke-dasharray='2,2'/></svg>
<svg style='left:20px;top:1177px;' width='36' height='29' viewBox='0 0 36 29'><rect x='10.5' y='1.5' width='23' height='17' fill='#535353' stroke='#e4e4e4' stroke-width='2.2'/><path d='M10.5,7 H1.5 V25.5 H24 V18.5' fill='none' stroke='#e4e4e4' stroke-width='2.2'/></svg>
<svg style='left:58px;top:1204px;' width='7' height='7' viewBox='0 0 7 7'><polygon points='7,0 7,7 0,7' fill='#d8d8d8'/></svg>
<svg style='left:2172px;top:120px;' width='16' height='10' viewBox='0 0 16 10'><polyline points='1,1 5,5 1,9' fill='none' stroke='#cfcfcf' stroke-width='1.6'/><polyline points='9,1 13,5 9,9' fill='none' stroke='#cfcfcf' stroke-width='1.6'/></svg>
<div class='a' style='left:1700px;top:135px;width:501px;height:1px;background:#3c3c3c;'></div>
<div class='a' style='left:1854px;top:136px;width:1px;height:57px;background:#3a3a3a;'></div>
<div class='a' style='left:1934px;top:136px;width:1px;height:57px;background:#3a3a3a;'></div>
<div class='t' style='left:1719px;top:154px;font-size:24px;color:#c8c8c8;font-weight:bold'>3D</div>
<div class='t' style='left:1791px;top:154px;font-size:23px;color:#f0f0f0;-webkit-text-stroke:0.45px #f0f0f0'>图层</div>
<div class='t' style='left:1871px;top:154px;font-size:23px;color:#c8c8c8;-webkit-text-stroke:0.45px #c8c8c8'>通道</div>
<svg style='left:2167px;top:157px;' width='22' height='16' viewBox='0 0 22 16'><g fill='#d6d6d6'><rect x='1' y='1' width='20' height='2'/><rect x='1' y='5' width='20' height='2'/><rect x='1' y='9' width='20' height='2'/><rect x='1' y='13' width='20' height='2'/></g></svg>
<div class='a' style='left:1707px;top:208px;width:154px;height:41px;background:#454545;border:2px solid #656565;border-radius:6px'></div>
<svg style='left:1723px;top:216px;' width='24' height='24' viewBox='0 0 24 24'><circle cx='14' cy='10' r='7.3' fill='none' stroke='#e8e8e8' stroke-width='2.2'/><line x1='8.5' y1='15.5' x2='3' y2='21' stroke='#e8e8e8' stroke-width='3' stroke-linecap='round'/></svg>
<div class='t' style='left:1750px;top:216px;font-size:23px;color:#f2f2f2;-webkit-text-stroke:0.45px #f2f2f2'>类型</div>
<svg style='left:1840px;top:225px;' width='14' height='8' viewBox='0 0 14 8'><polyline points='1,1 7,7 13,1' fill='none' stroke='#e4e4e4' stroke-width='2' stroke-linecap='round' stroke-linejoin='round'/></svg>
<svg style='left:1886px;top:218px;' width='26' height='22' viewBox='0 0 26 22'><rect x='1.5' y='1.5' width='22' height='18' fill='none' stroke='#e4e4e4' stroke-width='2.2'/><polygon points='5,15.5 9.5,8 12.5,12 15,9 20,15.5' fill='#e4e4e4'/></svg>
<svg style='left:1935px;top:217px;' width='24' height='24' viewBox='0 0 24 24'><circle cx='12' cy='12' r='10' fill='none' stroke='#e4e4e4' stroke-width='2.2'/><path d='M19.1,4.9 A10,10 0 0 1 4.9,19.1 Z' fill='#e4e4e4'/></svg>
<svg style='left:1984px;top:218px;' width='22' height='22' viewBox='0 0 22 22'><g fill='#e4e4e4'><rect x='1' y='1' width='20' height='3'/><rect x='1' y='1' width='3' height='6'/><rect x='18' y='1' width='3' height='6'/><rect x='9.5' y='1' width='3' height='19'/><rect x='5' y='18' width='12' height='3'/></g></svg>
<svg style='left:2031px;top:218px;' width='25' height='23' viewBox='0 0 25 23'><rect x='4' y='4' width='17' height='15' fill='none' stroke='#e4e4e4' stroke-width='2'/><g fill='#535353' stroke='#e4e4e4' stroke-width='1.6'><rect x='1' y='1' width='5' height='5'/><rect x='19' y='1' width='5' height='5'/><rect x='1' y='17' width='5' height='5'/><rect x='19' y='17' width='5' height='5'/></g></svg>
<svg style='left:2081px;top:217px;' width='23' height='25' viewBox='0 0 23 25'><path d='M6,2 H14 L20,8 V22 H6 Z' fill='none' stroke='#e4e4e4' stroke-width='2'/><path d='M14,2 V8 H20' fill='none' stroke='#e4e4e4' stroke-width='1.6'/><rect x='1' y='12' width='10' height='12' fill='#e4e4e4'/></svg>
<svg style='left:2132px;top:210px;' width='20' height='38' viewBox='0 0 20 38'><rect x='1' y='1' width='18' height='36' rx='9' fill='#4a4a4a' stroke='#5c5c5c' stroke-width='1.5'/><circle cx='10' cy='10' r='8.2' fill='#e8e8e8'/></svg>
<div class='a' style='left:1700px;top:255px;width:501px;height:2px;background:#3e3e3e;'></div>
<div class='a' style='left:1707px;top:263px;width:226px;height:40px;background:#454545;border:2px solid #656565;border-radius:6px'></div>
<div class='t' style='left:1722px;top:271px;font-size:23px;color:#f2f2f2;-webkit-text-stroke:0.45px #f2f2f2'>穿透</div>
<svg style='left:1912px;top:280px;' width='14' height='8' viewBox='0 0 14 8'><polyline points='1,1 7,7 13,1' fill='none' stroke='#e4e4e4' stroke-width='2' stroke-linecap='round' stroke-linejoin='round'/></svg>
<div class='t' style='left:1941px;top:273px;font-size:23px;color:#dcdcdc;-webkit-text-stroke:0.45px #dcdcdc'>不透明度:</div>
<div class='a' style='left:2042px;top:262px;width:111px;height:41px;background:#454545;border:2px solid #656565;border-radius:6px'></div>
<div class='a' style='left:2121px;top:264px;width:2px;height:37px;background:#5a5a5a;'></div>
<div class='t' style='left:2050px;top:275px;font-size:22px;color:#f2f2f2;'>100%</div>
<svg style='left:2130px;top:280px;' width='14' height='8' viewBox='0 0 14 8'><polyline points='1,1 7,7 13,1' fill='none' stroke='#e4e4e4' stroke-width='2' stroke-linecap='round' stroke-linejoin='round'/></svg>
<div class='a' style='left:1700px;top:309px;width:501px;height:2px;background:#3e3e3e;'></div>
<div class='t' style='left:1711px;top:326px;font-size:23px;color:#dcdcdc;-webkit-text-stroke:0.45px #dcdcdc'>锁定:</div>
<svg style='left:1774px;top:326px;' width='24' height='24' viewBox='0 0 24 24'><rect x='1' y='1' width='22' height='22' fill='#8f8f8f'/><g fill='#4e4e4e'><rect x='3' y='3' width='6' height='6'/><rect x='15' y='3' width='6' height='6'/><rect x='9' y='9' width='6' height='6'/><rect x='3' y='15' width='6' height='6'/><rect x='15' y='15' width='6' height='6'/></g></svg>
<svg style='left:1817px;top:323px;' width='28' height='30' viewBox='0 0 28 30'><path d='M25,1 C26.5,0.5 27.5,2 26.5,3.5 L14,19 L10.5,16 Z' fill='#8f8f8f'/><path d='M9.5,17 L13,20.5 C13,25 9,28.5 1,29 C4,26 3.5,22.5 6,20 C7,19 8.5,17.5 9.5,17 Z' fill='#8f8f8f'/></svg>
<svg style='left:1859px;top:325px;' width='28' height='28' viewBox='0 0 28 28'><g fill='#8f8f8f'><rect x='12.8' y='4' width='2.4' height='20'/><rect x='4' y='12.8' width='20' height='2.4'/><polygon points='14,0 19,6 9,6'/><polygon points='14,28 19,22 9,22'/><polygon points='0,14 6,9 6,19'/><polygon points='28,14 22,9 22,19'/></g></svg>
<svg style='left:1903px;top:324px;' width='30' height='25' viewBox='0 0 30 25'><path d='M6,5 H19 L24,10 V20 H6 Z' fill='none' stroke='#e4e4e4' stroke-width='2'/><g fill='#e4e4e4'><rect x='1' y='4' width='3' height='2'/><rect x='5' y='0' width='2' height='3'/><rect x='26' y='4' width='3' height='2'/><rect x='23' y='0' width='2' height='3'/><rect x='1' y='19' width='3' height='2'/><rect x='5' y='22' width='2' height='3'/><rect x='26' y='19' width='3' height='2'/><rect x='23' y='22' width='2' height='3'/></g></svg>
<svg style='left:1951px;top:325px;' width='22' height='25' viewBox='0 0 22 25'><path d='M5,11 V8 C5,2 17,2 17,8 V11' fill='none' stroke='#e4e4e4' stroke-width='2.6'/><rect x='1' y='11' width='20' height='13' rx='1.5' fill='#e4e4e4'/><circle cx='11' cy='17.5' r='2.3' fill='#535353'/></svg>
<div class='t' style='left:1987px;top:326px;font-size:23px;color:#dcdcdc;-webkit-text-stroke:0.45px #dcdcdc'>填充:</div>
<div class='a' style='left:2042px;top:316px;width:111px;height:41px;background:#454545;border:2px solid #656565;border-radius:6px'></div>
<div class='a' style='left:2121px;top:318px;width:2px;height:37px;background:#5a5a5a;'></div>
<div class='t' style='left:2050px;top:329px;font-size:22px;color:#f2f2f2;'>100%</div>
<svg style='left:2130px;top:334px;' width='14' height='8' viewBox='0 0 14 8'><polyline points='1,1 7,7 13,1' fill='none' stroke='#e4e4e4' stroke-width='2' stroke-linecap='round' stroke-linejoin='round'/></svg>
<div class='a' style='left:1700px;top:365px;width:501px;height:3px;background:#3e3e3e;'></div>
<div class='a' style='left:1762px;top:368px;width:408px;height:44px;background:#6a6a6a;'></div>
<div class='a' style='left:1700px;top:412px;width:470px;height:2px;background:#454545;'></div>
<svg style='left:1717px;top:381px;' width='28' height='18' viewBox='0 0 28 18'><path d='M1,9 C6,1 22,1 27,9 C22,17 6,17 1,9 Z' fill='#e8e8e8'/><circle cx='13.5' cy='9' r='5.6' fill='#535353'/><circle cx='15.5' cy='7' r='1.6' fill='#e8e8e8'/></svg>
<svg style='left:1765px;top:384px;' width='20' height='11' viewBox='0 0 20 11'><polyline points='2,1.5 9.5,9 17,1.5' fill='none' stroke='#e2e2e2' stroke-width='1.8'/></svg>
<svg style='left:1792px;top:378px;' width='29' height='22' viewBox='0 0 29 22'><path d='M1,21 V2 Q1,1 2,1 H11 L13,4.5 H27 Q28,4.5 28,5.5 V21 Z' fill='#e6e6e6'/><rect x='3' y='6.5' width='23' height='5' fill='#6a6a6a'/><rect x='3' y='3' width='8' height='3.5' fill='#6a6a6a'/></svg>
<div class='t' style='left:1842px;top:384px;font-size:22px;color:#f2f2f2;-webkit-text-stroke:0.3px #f2f2f2'>OBJECTS</div>
<div class='a' style='left:1762px;top:414px;width:408px;height:44px;background:#6a6a6a;'></div>
<div class='a' style='left:1700px;top:458px;width:470px;height:2px;background:#454545;'></div>
<svg style='left:1717px;top:427px;' width='28' height='18' viewBox='0 0 28 18'><path d='M1,9 C6,1 22,1 27,9 C22,17 6,17 1,9 Z' fill='#e8e8e8'/><circle cx='13.5' cy='9' r='5.6' fill='#535353'/><circle cx='15.5' cy='7' r='1.6' fill='#e8e8e8'/></svg>
<svg style='left:1800px;top:420px;' width='32' height='32' viewBox='0 0 32 32'><path d='M0,32 V0 H32 V4.5 H4.5 V32 Z' fill='#1e1e1e'/><path d='M2.2,31 V2.2 H31' fill='none' stroke='#f4f4f4' stroke-width='2'/><rect x='10.5' y='11' width='18' height='18' fill='none' stroke='#e6e6e6' stroke-width='2'/><g fill='#6a6a6a' stroke='#e6e6e6' stroke-width='1.8'><rect x='8' y='8.5' width='5' height='5'/><rect x='26' y='8.5' width='5' height='5'/><rect x='8' y='26.5' width='5' height='5'/><rect x='26' y='26.5' width='5' height='5'/></g></svg>
<div class='t' style='left:1849px;top:428px;font-size:22px;color:#f2f2f2;-webkit-text-stroke:0.45px #f2f2f2'>复合形状</div>
<div class='a' style='left:1762px;top:460px;width:408px;height:44px;background:#6a6a6a;'></div>
<div class='a' style='left:1700px;top:504px;width:470px;height:2px;background:#454545;'></div>
<svg style='left:1717px;top:473px;' width='28' height='18' viewBox='0 0 28 18'><path d='M1,9 C6,1 22,1 27,9 C22,17 6,17 1,9 Z' fill='#e8e8e8'/><circle cx='13.5' cy='9' r='5.6' fill='#535353'/><circle cx='15.5' cy='7' r='1.6' fill='#e8e8e8'/></svg>
<svg style='left:1800px;top:466px;' width='32' height='32' viewBox='0 0 32 32'><path d='M0,32 V0 H32 V4.5 H4.5 V32 Z' fill='#1e1e1e'/><path d='M2.2,31 V2.2 H31' fill='none' stroke='#f4f4f4' stroke-width='2'/><rect x='10.5' y='11' width='18' height='18' fill='none' stroke='#e6e6e6' stroke-width='2'/><g fill='#6a6a6a' stroke='#e6e6e6' stroke-width='1.8'><rect x='8' y='8.5' width='5' height='5'/><rect x='26' y='8.5' width='5' height='5'/><rect x='8' y='26.5' width='5' height='5'/><rect x='26' y='26.5' width='5' height='5'/></g></svg>
<div class='t' style='left:1849px;top:474px;font-size:22px;color:#f2f2f2;-webkit-text-stroke:0.45px #f2f2f2'>复合形状</div>
<div class='a' style='left:1762px;top:506px;width:408px;height:44px;background:#6a6a6a;'></div>
<div class='a' style='left:1700px;top:550px;width:470px;height:2px;background:#454545;'></div>
<svg style='left:1717px;top:519px;' width='28' height='18' viewBox='0 0 28 18'><path d='M1,9 C6,1 22,1 27,9 C22,17 6,17 1,9 Z' fill='#e8e8e8'/><circle cx='13.5' cy='9' r='5.6' fill='#535353'/><circle cx='15.5' cy='7' r='1.6' fill='#e8e8e8'/></svg>
<svg style='left:1800px;top:512px;' width='32' height='32' viewBox='0 0 32 32'><path d='M0,32 V0 H32 V4.5 H4.5 V32 Z' fill='#1e1e1e'/><path d='M2.2,31 V2.2 H31' fill='none' stroke='#f4f4f4' stroke-width='2'/><rect x='10.5' y='11' width='18' height='18' fill='none' stroke='#e6e6e6' stroke-width='2'/><g fill='#6a6a6a' stroke='#e6e6e6' stroke-width='1.8'><rect x='8' y='8.5' width='5' height='5'/><rect x='26' y='8.5' width='5' height='5'/><rect x='8' y='26.5' width='5' height='5'/><rect x='26' y='26.5' width='5' height='5'/></g></svg>
<div class='t' style='left:1849px;top:520px;font-size:22px;color:#f2f2f2;-webkit-text-stroke:0.45px #f2f2f2'>复合形状</div>
<div class='a' style='left:1762px;top:552px;width:408px;height:44px;background:#6a6a6a;'></div>
<div class='a' style='left:1700px;top:596px;width:470px;height:2px;background:#454545;'></div>
<svg style='left:1717px;top:565px;' width='28' height='18' viewBox='0 0 28 18'><path d='M1,9 C6,1 22,1 27,9 C22,17 6,17 1,9 Z' fill='#e8e8e8'/><circle cx='13.5' cy='9' r='5.6' fill='#535353'/><circle cx='15.5' cy='7' r='1.6' fill='#e8e8e8'/></svg>
<svg style='left:1800px;top:558px;' width='32' height='32' viewBox='0 0 32 32'><path d='M0,32 V0 H32 V4.5 H4.5 V32 Z' fill='#1e1e1e'/><path d='M2.2,31 V2.2 H31' fill='none' stroke='#f4f4f4' stroke-width='2'/><rect x='10.5' y='11' width='18' height='18' fill='none' stroke='#e6e6e6' stroke-width='2'/><g fill='#6a6a6a' stroke='#e6e6e6' stroke-width='1.8'><rect x='8' y='8.5' width='5' height='5'/><rect x='26' y='8.5' width='5' height='5'/><rect x='8' y='26.5' width='5' height='5'/><rect x='26' y='26.5' width='5' height='5'/></g></svg>
<div class='t' style='left:1849px;top:566px;font-size:22px;color:#f2f2f2;-webkit-text-stroke:0.45px #f2f2f2'>复合形状</div>
<div class='a' style='left:1762px;top:598px;width:408px;height:44px;background:#6a6a6a;'></div>
<div class='a' style='left:1700px;top:642px;width:470px;height:2px;background:#454545;'></div>
<svg style='left:1717px;top:611px;' width='28' height='18' viewBox='0 0 28 18'><path d='M1,9 C6,1 22,1 27,9 C22,17 6,17 1,9 Z' fill='#e8e8e8'/><circle cx='13.5' cy='9' r='5.6' fill='#535353'/><circle cx='15.5' cy='7' r='1.6' fill='#e8e8e8'/></svg>
<svg style='left:1800px;top:604px;' width='32' height='32' viewBox='0 0 32 32'><path d='M0,32 V0 H32 V4.5 H4.5 V32 Z' fill='#1e1e1e'/><path d='M2.2,31 V2.2 H31' fill='none' stroke='#f4f4f4' stroke-width='2'/><rect x='10.5' y='11' width='18' height='18' fill='none' stroke='#e6e6e6' stroke-width='2'/><g fill='#6a6a6a' stroke='#e6e6e6' stroke-width='1.8'><rect x='8' y='8.5' width='5' height='5'/><rect x='26' y='8.5' width='5' height='5'/><rect x='8' y='26.5' width='5' height='5'/><rect x='26' y='26.5' width='5' height='5'/></g></svg>
<div class='t' style='left:1849px;top:612px;font-size:22px;color:#f2f2f2;-webkit-text-stroke:0.45px #f2f2f2'>复合形状</div>
<div class='a' style='left:1762px;top:645px;width:408px;height:44px;background:#6a6a6a;'></div>
<div class='a' style='left:1700px;top:689px;width:470px;height:2px;background:#454545;'></div>
<svg style='left:1717px;top:658px;' width='28' height='18' viewBox='0 0 28 18'><path d='M1,9 C6,1 22,1 27,9 C22,17 6,17 1,9 Z' fill='#e8e8e8'/><circle cx='13.5' cy='9' r='5.6' fill='#535353'/><circle cx='15.5' cy='7' r='1.6' fill='#e8e8e8'/></svg>
<svg style='left:1797px;top:661px;' width='20' height='11' viewBox='0 0 20 11'><polyline points='2,1.5 9.5,9 17,1.5' fill='none' stroke='#e2e2e2' stroke-width='1.8'/></svg>
<svg style='left:1824px;top:655px;' width='29' height='22' viewBox='0 0 29 22'><path d='M1,21 V2 Q1,1 2,1 H11 L13,4.5 H27 Q28,4.5 28,5.5 V21 Z' fill='#e6e6e6'/><rect x='3' y='6.5' width='23' height='5' fill='#6a6a6a'/><rect x='3' y='3' width='8' height='3.5' fill='#6a6a6a'/></svg>
<div class='t' style='left:1874px;top:660px;font-size:23px;color:#f2f2f2;-webkit-text-stroke:0.45px #f2f2f2'>&lt;编组&gt;</div>
<div class='a' style='left:1762px;top:691px;width:408px;height:44px;background:#6a6a6a;'></div>
<div class='a' style='left:1700px;top:735px;width:470px;height:2px;background:#454545;'></div>
<svg style='left:1717px;top:704px;' width='28' height='18' viewBox='0 0 28 18'><path d='M1,9 C6,1 22,1 27,9 C22,17 6,17 1,9 Z' fill='#e8e8e8'/><circle cx='13.5' cy='9' r='5.6' fill='#535353'/><circle cx='15.5' cy='7' r='1.6' fill='#e8e8e8'/></svg>
<svg style='left:1832px;top:697px;' width='32' height='32' viewBox='0 0 32 32'><path d='M0,32 V0 H32 V4.5 H4.5 V32 Z' fill='#1e1e1e'/><path d='M2.2,31 V2.2 H31' fill='none' stroke='#f4f4f4' stroke-width='2'/><rect x='10.5' y='11' width='18' height='18' fill='none' stroke='#e6e6e6' stroke-width='2'/><g fill='#6a6a6a' stroke='#e6e6e6' stroke-width='1.8'><rect x='8' y='8.5' width='5' height='5'/><rect x='26' y='8.5' width='5' height='5'/><rect x='8' y='26.5' width='5' height='5'/><rect x='26' y='26.5' width='5' height='5'/></g></svg>
<div class='t' style='left:1881px;top:705px;font-size:22px;color:#f2f2f2;-webkit-text-stroke:0.45px #f2f2f2'>复合形状</div>
<div class='a' style='left:1762px;top:737px;width:408px;height:44px;background:#6a6a6a;'></div>
<div class='a' style='left:1700px;top:781px;width:470px;height:2px;background:#454545;'></div>
<svg style='left:1717px;top:750px;' width='28' height='18' viewBox='0 0 28 18'><path d='M1,9 C6,1 22,1 27,9 C22,17 6,17 1,9 Z' fill='#e8e8e8'/><circle cx='13.5' cy='9' r='5.6' fill='#535353'/><circle cx='15.5' cy='7' r='1.6' fill='#e8e8e8'/></svg>
<svg style='left:1832px;top:743px;' width='32' height='32' viewBox='0 0 32 32'><path d='M0,32 V0 H32 V4.5 H4.5 V32 Z' fill='#1e1e1e'/><path d='M2.2,31 V2.2 H31' fill='none' stroke='#f4f4f4' stroke-width='2'/><rect x='10.5' y='11' width='18' height='18' fill='none' stroke='#e6e6e6' stroke-width='2'/><g fill='#6a6a6a' stroke='#e6e6e6' stroke-width='1.8'><rect x='8' y='8.5' width='5' height='5'/><rect x='26' y='8.5' width='5' height='5'/><rect x='8' y='26.5' width='5' height='5'/><rect x='26' y='26.5' width='5' height='5'/></g></svg>
<div class='t' style='left:1881px;top:751px;font-size:22px;color:#f2f2f2;-webkit-text-stroke:0.45px #f2f2f2'>复合形状</div>
<div class='a' style='left:1762px;top:783px;width:408px;height:44px;background:#6a6a6a;'></div>
<div class='a' style='left:1700px;top:827px;width:470px;height:2px;background:#454545;'></div>
<svg style='left:1717px;top:796px;' width='28' height='18' viewBox='0 0 28 18'><path d='M1,9 C6,1 22,1 27,9 C22,17 6,17 1,9 Z' fill='#e8e8e8'/><circle cx='13.5' cy='9' r='5.6' fill='#535353'/><circle cx='15.5' cy='7' r='1.6' fill='#e8e8e8'/></svg>
<svg style='left:1800px;top:789px;' width='32' height='32' viewBox='0 0 32 32'><path d='M0,32 V0 H32 V4.5 H4.5 V32 Z' fill='#1e1e1e'/><path d='M2.2,31 V2.2 H31' fill='none' stroke='#f4f4f4' stroke-width='2'/><rect x='10.5' y='11' width='18' height='18' fill='none' stroke='#e6e6e6' stroke-width='2'/><g fill='#6a6a6a' stroke='#e6e6e6' stroke-width='1.8'><rect x='8' y='8.5' width='5' height='5'/><rect x='26' y='8.5' width='5' height='5'/><rect x='8' y='26.5' width='5' height='5'/><rect x='26' y='26.5' width='5' height='5'/></g></svg>
<div class='t' style='left:1849px;top:797px;font-size:22px;color:#f2f2f2;-webkit-text-stroke:0.45px #f2f2f2'>复合形状</div>
<div class='a' style='left:1762px;top:829px;width:408px;height:44px;background:#6a6a6a;'></div>
<div class='a' style='left:1700px;top:873px;width:470px;height:2px;background:#454545;'></div>
<svg style='left:1717px;top:842px;' width='28' height='18' viewBox='0 0 28 18'><path d='M1,9 C6,1 22,1 27,9 C22,17 6,17 1,9 Z' fill='#e8e8e8'/><circle cx='13.5' cy='9' r='5.6' fill='#535353'/><circle cx='15.5' cy='7' r='1.6' fill='#e8e8e8'/></svg>
<svg style='left:1800px;top:835px;' width='32' height='32' viewBox='0 0 32 32'><path d='M0,32 V0 H32 V4.5 H4.5 V32 Z' fill='#1e1e1e'/><path d='M2.2,31 V2.2 H31' fill='none' stroke='#f4f4f4' stroke-width='2'/><rect x='10.5' y='11' width='18' height='18' fill='none' stroke='#e6e6e6' stroke-width='2'/><g fill='#6a6a6a' stroke='#e6e6e6' stroke-width='1.8'><rect x='8' y='8.5' width='5' height='5'/><rect x='26' y='8.5' width='5' height='5'/><rect x='8' y='26.5' width='5' height='5'/><rect x='26' y='26.5' width='5' height='5'/></g></svg>
<div class='t' style='left:1849px;top:843px;font-size:22px;color:#f2f2f2;-webkit-text-stroke:0.45px #f2f2f2'>复合形状</div>
<div class='a' style='left:1762px;top:875px;width:408px;height:44px;background:#6a6a6a;'></div>
<div class='a' style='left:1700px;top:919px;width:470px;height:2px;background:#454545;'></div>
<svg style='left:1717px;top:888px;' width='28' height='18' viewBox='0 0 28 18'><path d='M1,9 C6,1 22,1 27,9 C22,17 6,17 1,9 Z' fill='#e8e8e8'/><circle cx='13.5' cy='9' r='5.6' fill='#535353'/><circle cx='15.5' cy='7' r='1.6' fill='#e8e8e8'/></svg>
<svg style='left:1800px;top:881px;' width='32' height='32' viewBox='0 0 32 32'><path d='M0,32 V0 H32 V4.5 H4.5 V32 Z' fill='#1e1e1e'/><path d='M2.2,31 V2.2 H31' fill='none' stroke='#f4f4f4' stroke-width='2'/><rect x='10.5' y='11' width='18' height='18' fill='none' stroke='#e6e6e6' stroke-width='2'/><g fill='#6a6a6a' stroke='#e6e6e6' stroke-width='1.8'><rect x='8' y='8.5' width='5' height='5'/><rect x='26' y='8.5' width='5' height='5'/><rect x='8' y='26.5' width='5' height='5'/><rect x='26' y='26.5' width='5' height='5'/></g></svg>
<div class='t' style='left:1849px;top:889px;font-size:22px;color:#f2f2f2;-webkit-text-stroke:0.45px #f2f2f2'>复合形状</div>
<div class='a' style='left:1762px;top:921px;width:408px;height:44px;background:#6a6a6a;'></div>
<div class='a' style='left:1700px;top:965px;width:470px;height:2px;background:#454545;'></div>
<svg style='left:1717px;top:934px;' width='28' height='18' viewBox='0 0 28 18'><path d='M1,9 C6,1 22,1 27,9 C22,17 6,17 1,9 Z' fill='#e8e8e8'/><circle cx='13.5' cy='9' r='5.6' fill='#535353'/><circle cx='15.5' cy='7' r='1.6' fill='#e8e8e8'/></svg>
<svg style='left:1800px;top:927px;' width='32' height='32' viewBox='0 0 32 32'><path d='M0,32 V0 H32 V4.5 H4.5 V32 Z' fill='#1e1e1e'/><path d='M2.2,31 V2.2 H31' fill='none' stroke='#f4f4f4' stroke-width='2'/><rect x='10.5' y='11' width='18' height='18' fill='none' stroke='#e6e6e6' stroke-width='2'/><g fill='#6a6a6a' stroke='#e6e6e6' stroke-width='1.8'><rect x='8' y='8.5' width='5' height='5'/><rect x='26' y='8.5' width='5' height='5'/><rect x='8' y='26.5' width='5' height='5'/><rect x='26' y='26.5' width='5' height='5'/></g></svg>
<div class='t' style='left:1849px;top:935px;font-size:22px;color:#f2f2f2;-webkit-text-stroke:0.45px #f2f2f2'>复合形状</div>
<div class='a' style='left:1762px;top:967px;width:408px;height:44px;background:#6a6a6a;'></div>
<div class='a' style='left:1700px;top:1011px;width:470px;height:2px;background:#454545;'></div>
<svg style='left:1717px;top:980px;' width='28' height='18' viewBox='0 0 28 18'><path d='M1,9 C6,1 22,1 27,9 C22,17 6,17 1,9 Z' fill='#e8e8e8'/><circle cx='13.5' cy='9' r='5.6' fill='#535353'/><circle cx='15.5' cy='7' r='1.6' fill='#e8e8e8'/></svg>
<svg style='left:1800px;top:973px;' width='32' height='32' viewBox='0 0 32 32'><path d='M0,32 V0 H32 V4.5 H4.5 V32 Z' fill='#1e1e1e'/><path d='M2.2,31 V2.2 H31' fill='none' stroke='#f4f4f4' stroke-width='2'/><rect x='10.5' y='11' width='18' height='18' fill='none' stroke='#e6e6e6' stroke-width='2'/><g fill='#6a6a6a' stroke='#e6e6e6' stroke-width='1.8'><rect x='8' y='8.5' width='5' height='5'/><rect x='26' y='8.5' width='5' height='5'/><rect x='8' y='26.5' width='5' height='5'/><rect x='26' y='26.5' width='5' height='5'/></g></svg>
<div class='t' style='left:1849px;top:981px;font-size:22px;color:#f2f2f2;-webkit-text-stroke:0.45px #f2f2f2'>复合形状</div>
<div class='a' style='left:1762px;top:1013px;width:408px;height:44px;background:#6a6a6a;'></div>
<div class='a' style='left:1700px;top:1057px;width:470px;height:2px;background:#454545;'></div>
<svg style='left:1717px;top:1026px;' width='28' height='18' viewBox='0 0 28 18'><path d='M1,9 C6,1 22,1 27,9 C22,17 6,17 1,9 Z' fill='#e8e8e8'/><circle cx='13.5' cy='9' r='5.6' fill='#535353'/><circle cx='15.5' cy='7' r='1.6' fill='#e8e8e8'/></svg>
<svg style='left:1800px;top:1019px;' width='32' height='32' viewBox='0 0 32 32'><path d='M0,32 V0 H32 V4.5 H4.5 V32 Z' fill='#1e1e1e'/><path d='M2.2,31 V2.2 H31' fill='none' stroke='#f4f4f4' stroke-width='2'/><rect x='10.5' y='11' width='18' height='18' fill='none' stroke='#e6e6e6' stroke-width='2'/><g fill='#6a6a6a' stroke='#e6e6e6' stroke-width='1.8'><rect x='8' y='8.5' width='5' height='5'/><rect x='26' y='8.5' width='5' height='5'/><rect x='8' y='26.5' width='5' height='5'/><rect x='26' y='26.5' width='5' height='5'/></g></svg>
<div class='t' style='left:1849px;top:1027px;font-size:22px;color:#f2f2f2;-webkit-text-stroke:0.45px #f2f2f2'>复合形状</div>
<div class='a' style='left:1762px;top:1060px;width:408px;height:44px;background:#6a6a6a;'></div>
<div class='a' style='left:1700px;top:1104px;width:470px;height:2px;background:#454545;'></div>
<svg style='left:1717px;top:1073px;' width='28' height='18' viewBox='0 0 28 18'><path d='M1,9 C6,1 22,1 27,9 C22,17 6,17 1,9 Z' fill='#e8e8e8'/><circle cx='13.5' cy='9' r='5.6' fill='#535353'/><circle cx='15.5' cy='7' r='1.6' fill='#e8e8e8'/></svg>
<svg style='left:1800px;top:1066px;' width='32' height='32' viewBox='0 0 32 32'><path d='M0,32 V0 H32 V4.5 H4.5 V32 Z' fill='#1e1e1e'/><path d='M2.2,31 V2.2 H31' fill='none' stroke='#f4f4f4' stroke-width='2'/><rect x='10.5' y='11' width='18' height='18' fill='none' stroke='#e6e6e6' stroke-width='2'/><g fill='#6a6a6a' stroke='#e6e6e6' stroke-width='1.8'><rect x='8' y='8.5' width='5' height='5'/><rect x='26' y='8.5' width='5' height='5'/><rect x='8' y='26.5' width='5' height='5'/><rect x='26' y='26.5' width='5' height='5'/></g></svg>
<div class='t' style='left:1849px;top:1074px;font-size:22px;color:#f2f2f2;-webkit-text-stroke:0.45px #f2f2f2'>复合形状</div>
<div class='a' style='left:1762px;top:1106px;width:408px;height:44px;background:#6a6a6a;'></div>
<div class='a' style='left:1700px;top:1150px;width:470px;height:2px;background:#454545;'></div>
<svg style='left:1717px;top:1119px;' width='28' height='18' viewBox='0 0 28 18'><path d='M1,9 C6,1 22,1 27,9 C22,17 6,17 1,9 Z' fill='#e8e8e8'/><circle cx='13.5' cy='9' r='5.6' fill='#535353'/><circle cx='15.5' cy='7' r='1.6' fill='#e8e8e8'/></svg>
<svg style='left:1800px;top:1112px;' width='32' height='32' viewBox='0 0 32 32'><path d='M0,32 V0 H32 V4.5 H4.5 V32 Z' fill='#1e1e1e'/><path d='M2.2,31 V2.2 H31' fill='none' stroke='#f4f4f4' stroke-width='2'/><rect x='10.5' y='11' width='18' height='18' fill='none' stroke='#e6e6e6' stroke-width='2'/><g fill='#6a6a6a' stroke='#e6e6e6' stroke-width='1.8'><rect x='8' y='8.5' width='5' height='5'/><rect x='26' y='8.5' width='5' height='5'/><rect x='8' y='26.5' width='5' height='5'/><rect x='26' y='26.5' width='5' height='5'/></g></svg>
<div class='t' style='left:1849px;top:1120px;font-size:22px;color:#f2f2f2;-webkit-text-stroke:0.45px #f2f2f2'>复合形状</div>
<div class='a' style='left:1762px;top:1152px;width:408px;height:44px;background:#6a6a6a;'></div>
<div class='a' style='left:1700px;top:1196px;width:470px;height:2px;background:#454545;'></div>
<svg style='left:1717px;top:1165px;' width='28' height='18' viewBox='0 0 28 18'><path d='M1,9 C6,1 22,1 27,9 C22,17 6,17 1,9 Z' fill='#e8e8e8'/><circle cx='13.5' cy='9' r='5.6' fill='#535353'/><circle cx='15.5' cy='7' r='1.6' fill='#e8e8e8'/></svg>
<svg style='left:1800px;top:1158px;' width='32' height='32' viewBox='0 0 32 32'><path d='M0,32 V0 H32 V4.5 H4.5 V32 Z' fill='#1e1e1e'/><path d='M2.2,31 V2.2 H31' fill='none' stroke='#f4f4f4' stroke-width='2'/><rect x='10.5' y='11' width='18' height='18' fill='none' stroke='#e6e6e6' stroke-width='2'/><g fill='#6a6a6a' stroke='#e6e6e6' stroke-width='1.8'><rect x='8' y='8.5' width='5' height='5'/><rect x='26' y='8.5' width='5' height='5'/><rect x='8' y='26.5' width='5' height='5'/><rect x='26' y='26.5' width='5' height='5'/></g></svg>
<div class='t' style='left:1849px;top:1166px;font-size:22px;color:#f2f2f2;-webkit-text-stroke:0.45px #f2f2f2'>复合形状</div>
<div class='a' style='left:1700px;top:1198px;width:470px;height:86px;background:#4e4e4e;'></div>
<div class='a' style='left:2170px;top:368px;width:30px;height:916px;background:#4b4b4b;'></div>
<div class='a' style='left:2200px;top:113px;width:2px;height:1223px;background:#2a2a2a;'></div>
<div class='a' style='left:1700px;top:1284px;width:501px;height:2px;background:#3e3e3e;'></div>
<svg style='left:1792px;top:1300px;' width='30' height='18' viewBox='0 0 30 18'><g fill='none' stroke='#e4e4e4' stroke-width='2.6'><path d='M11,2.5 H8 a6.5,6.5 0 0 0 0,13 H11'/><path d='M19,2.5 H22 a6.5,6.5 0 0 1 0,13 H19'/></g><rect x='8' y='7.6' width='14' height='2.8' rx='1.4' fill='#e4e4e4'/></svg>
<div class='t' style='left:1849px;top:1293px;font-size:29px;color:#8a8a8a;font-family:'Liberation Serif',serif'><i>fx</i></div>
<svg style='left:1904px;top:1298px;' width='26' height='22' viewBox='0 0 26 22'><rect x='1' y='1' width='24' height='20' rx='1.5' fill='#a2a2a2'/><circle cx='13' cy='11' r='5.5' fill='#535353'/></svg>
<svg style='left:1959px;top:1298px;' width='22' height='22' viewBox='0 0 22 22'><circle cx='11' cy='11' r='9.5' fill='none' stroke='#e4e4e4' stroke-width='2.2'/><path d='M17.7,4.3 A9.5,9.5 0 0 1 4.3,17.7 Z' fill='#e4e4e4'/></svg>
<svg style='left:1983px;top:1325px;' width='8' height='5' viewBox='0 0 8 5'><rect x='0' y='0' width='8' height='2' fill='#e8e8e8'/><rect x='3' y='2' width='2' height='3' fill='#e8e8e8'/></svg>
<svg style='left:2012px;top:1298px;' width='25' height='21' viewBox='0 0 25 21'><path d='M1,4 H9 L10,1.5 H5 M1,5 H24 V20 H1 Z' fill='#e4e4e4'/><rect x='1' y='4' width='23' height='16' rx='1.5' fill='#e4e4e4'/></svg>
<svg style='left:2067px;top:1298px;' width='22' height='23' viewBox='0 0 22 23'><path d='M1.5,1.5 H20.5 V21 H8 L1.5,14.5 Z' fill='#3c3c3c' stroke='#e4e4e4' stroke-width='2.2'/><path d='M1.5,14.5 H8 V21' fill='none' stroke='#e4e4e4' stroke-width='2'/></svg>
<svg style='left:2121px;top:1296px;' width='22' height='26' viewBox='0 0 22 26'><g fill='none' stroke='#8e8e8e' stroke-width='2'><path d='M1,4.5 H21'/><path d='M8,4 V1.5 H14 V4'/><path d='M3.5,5 V24.5 H18.5 V5'/><path d='M8,9 V21 M11,9 V21 M14,9 V21'/></g></svg>
<div class='a' style='left:538px;top:614px;width:698px;height:275px;background:repeating-conic-gradient(#cbcbcb 0 25%, #ffffff 0 50%) 0 0/16px 16px'></div>
<svg style='left:538px;top:614px;' width='698' height='275' viewBox='0 0 698 275'>
<defs>
 <linearGradient id='gBody' x1='0' y1='0' x2='0' y2='1'>
  <stop offset='0' stop-color='#f29a6c'/><stop offset='1' stop-color='#ef8a64'/>
 </linearGradient>
 <linearGradient id='gBand' x1='0' y1='0' x2='0' y2='1'>
  <stop offset='0' stop-color='#f3ab7e'/><stop offset='1' stop-color='#f4ba8c'/>
 </linearGradient>
 <linearGradient id='gRoof' x1='0' y1='0' x2='0' y2='1'>
  <stop offset='0' stop-color='#f08f62'/><stop offset='1' stop-color='#f09d70'/>
 </linearGradient>
</defs>
<g transform='translate(-538 -614)' stroke-linejoin='round'>
 <!-- roof / pillars -->
 <path d='M632,686 L712,622 Q722,614 740,614 L918,614 Q936,616 946,628 L1007,698 L705,698 Z' fill='url(#gRoof)' stroke='#4f6aa6' stroke-width='2.5'/>
 <!-- windows -->
 <path d='M714,697 Q702,692 708,682 L748,633 Q753,626 762,626 L878,626 Q888,626 895,634 L938,686 Q944,697 930,697 Z' fill='#625967' stroke='#4f6aa6' stroke-width='2.5'/>
 <path d='M755,697 L779,626 L804,626 L792,697 Z' fill='#514858' stroke='none'/>
 <line x1='755' y1='697' x2='779' y2='626' stroke='#3a7fd8' stroke-width='2.2'/>
 <line x1='792' y1='697' x2='804' y2='626' stroke='#3a7fd8' stroke-width='2.2'/>
 <path d='M928,626 L946,626 L1004,697 L972,697 L920,636 Q915,626 928,626 Z' fill='#625967' stroke='#4f6aa6' stroke-width='2.5'/>
 <!-- upper body band -->
 <path d='M632,686 L705,698 L1007,698 Q1110,703 1190,722 Q1222,736 1223,760 L1223,770 L540,770 L540,728 Q542,700 568,694 Z' fill='url(#gBand)' stroke='#4f6aa6' stroke-width='2.5'/>
 <!-- lower body -->
 <path d='M539,721 L1000,721 Q1110,724 1200,745 Q1223,752 1223,765 L1223,842 L660,842 L545,818 Q539,816 539,810 Z' fill='url(#gBody)' stroke='#4f6aa6' stroke-width='2.5'/>
 <path d='M1004,721 Q1110,724 1200,745' fill='none' stroke='#4f6aa6' stroke-width='3'/>
 <!-- rear light -->
 <path d='M539,722 L563,722 Q576,722 576,734.5 Q576,747 563,747 L539,747 Z' fill='#ee6262' stroke='#4f6aa6' stroke-width='2.5'/>
 <!-- diagonal rear line -->
 <path d='M540,746 L705,820' fill='none' stroke='#4f6aa6' stroke-width='2.2'/>
 <!-- rear bumper -->
 <path d='M546,794 L706,821 L706,842 L660,842 L546,818 Q538,816 538,806 Q539,793 546,794 Z' fill='#f08262' stroke='#4f6aa6' stroke-width='2.4'/>
 <!-- front bumper strip -->
 <path d='M700,817.5 L1222,817.5 Q1235,818 1235,830 Q1235,842 1222,842 L700,842 Z' fill='#f08262' stroke='#4f6aa6' stroke-width='2.2'/>
 <!-- door strip -->
 <rect x='754' y='770' width='277' height='24.5' rx='12.25' fill='#f07e60' stroke='#4f6aa6' stroke-width='2.5'/>
 <!-- front light -->
 <rect x='1198' y='769' width='37' height='25.5' rx='12.7' fill='#f27c5c' stroke='#4f6aa6' stroke-width='2.5'/>
 <line x1='1223' y1='757' x2='1223' y2='842' stroke='#3a7fd8' stroke-width='1.8'/>
 <!-- wheels -->
 <g>
  <circle cx='659' cy='817.5' r='70.5' fill='#4c4757' stroke='#3e6cbd' stroke-width='3.2'/>
  <circle cx='659' cy='817.5' r='60' fill='none' stroke='#3a7fd8' stroke-width='1.6'/>
  <circle cx='659' cy='817.5' r='46.5' fill='#eef0f5' stroke='#4f6aa6' stroke-width='2.5'/>
  <circle cx='659' cy='817.5' r='24' fill='#dcdde3' stroke='#4f6aa6' stroke-width='2.5'/>
  <circle cx='1115' cy='817' r='70.5' fill='#4c4757' stroke='#3e6cbd' stroke-width='3.2'/>
  <circle cx='1115' cy='817' r='60' fill='none' stroke='#3a7fd8' stroke-width='1.6'/>
  <circle cx='1115' cy='817' r='46.5' fill='#eef0f5' stroke='#4f6aa6' stroke-width='2.5'/>
  <circle cx='1115' cy='817' r='24' fill='#dcdde3' stroke='#4f6aa6' stroke-width='2.5'/>
 </g>
 <!-- path overlay lines -->
 <g fill='none' stroke='#3a7fd8' stroke-width='1.8'>
  <path d='M705,817.5 L1223,817.5'/>
  <path d='M700,829 L1223,829'/>
  <path d='M660,842 L1223,842'/>
  <path d='M540,806 L706,830'/>
  <path d='M545,818 L660,842'/>
  <path d='M540,747 L706,818'/>
  <path d='M546,794 L706,821'/>
 </g>
</g>
</svg>
</body></html>
